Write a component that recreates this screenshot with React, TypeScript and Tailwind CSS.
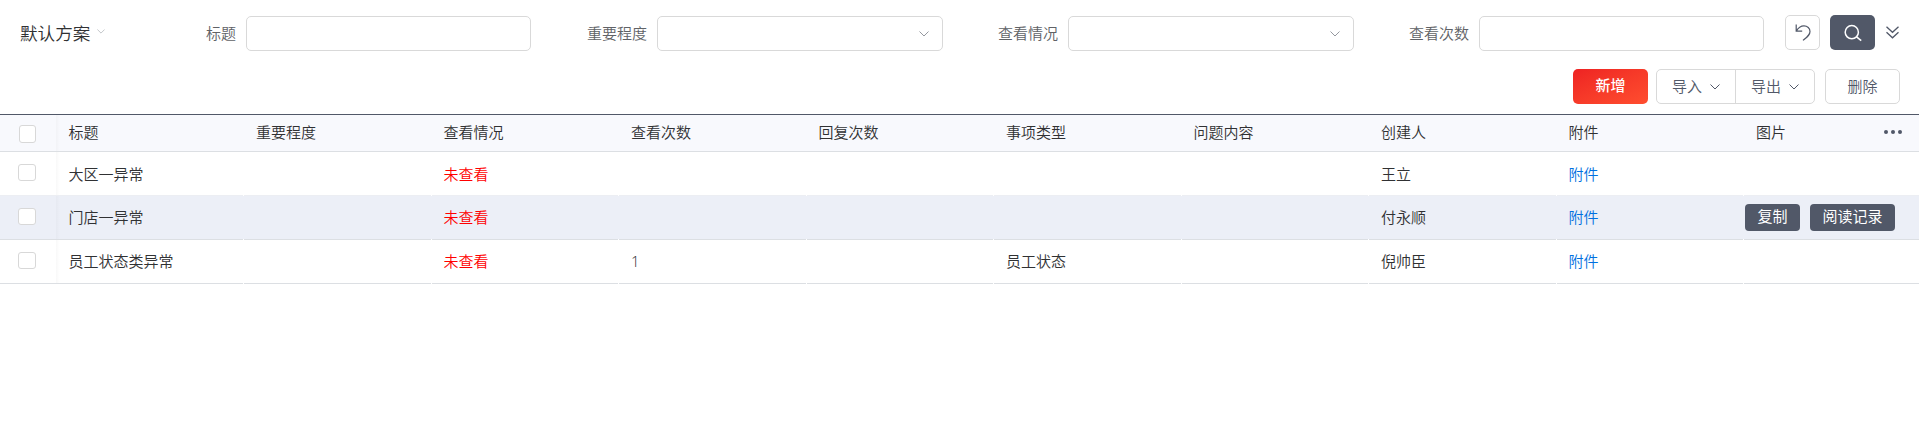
import type { ReactNode } from "react";

const columns = ["标题", "重要程度", "查看情况", "查看次数", "回复次数", "事项类型", "问题内容", "创建人", "附件", "图片"];

type Row = { title: string; count?: string; kind?: string; creator: string; active?: boolean; line: string; pad?: string };

const rows: Row[] = [
  { title: "大区一异常", creator: "王立", line: "bg-[#eceef3]", pad: "pt-[2px]" },
  { title: "门店一异常", creator: "付永顺", active: true, line: "bg-[#dcdfe3]" },
  { title: "员工状态类异常", count: "1", kind: "员工状态", creator: "倪帅臣", line: "bg-[#dcdfe3]" },
];

function Chevron({ className }: { className: string }) {
  return (
    <svg viewBox="0 0 10 6" fill="none" stroke="currentColor" className={className}>
      <path d="M0.5 0.5 5 5 9.5 0.5" />
    </svg>
  );
}

function Field({ label, select }: { label: string; select?: boolean }) {
  return (
    <div className="flex items-center gap-[10px]">
      <label className="w-[60px] pb-[2px] text-right text-[15px] leading-[33px] text-[#606266]">{label}</label>
      <div
        className={`flex h-[35px] items-center justify-end rounded-[5px] border border-[#d9d9d9] pr-[13px] ${
          select ? "w-[286px]" : "w-[285px]"
        }`}
      >
        {select && <Chevron className="h-[6px] w-[10px] text-[#95989f]" />}
      </div>
    </div>
  );
}

function Shade() {
  return <div className="w-[4px] shrink-0 bg-linear-to-r from-black/[0.025] to-transparent" />;
}

function Cell({ children }: { children: ReactNode }) {
  return <div className="flex w-[187.5px] shrink-0 items-center pl-[12.5px]">{children}</div>;
}

function ActionButton({ children, width }: { children: ReactNode; width: string }) {
  return (
    <button
      className={`flex h-[27px] items-center justify-center rounded-[4px] bg-[#515868] pb-[4px] text-[15px] font-normal leading-none text-white ${width}`}
    >
      {children}
    </button>
  );
}

function TableRow({ row }: { row: Row }) {
  const cells: ReactNode[] = [
    row.title,
    null,
    <span className="text-[#ff0000]">未查看</span>,
    row.count && <span className="font-['Open_Sans',sans-serif] font-light">{row.count}</span>,
    null,
    row.kind,
    null,
    row.creator,
    <a className="text-[#0070e0]">附件</a>,
    null,
  ];
  return (
    <div className="relative h-[44px] overflow-hidden text-[15px]">
      <div className={`flex h-[43px] ${row.active ? "bg-[#eceff7]" : "bg-white"}`}>
        <div className="w-[56px] shrink-0 pl-[18px] pt-[12px]">
          <span className="block h-[17px] w-[18px] rounded-[3px] border border-[#d8d8d8] bg-white" />
        </div>
        <Shade />
        <div className={`-ml-[4px] flex ${row.pad ?? ""}`}>
          {cells.map((cell, i) => (
            <Cell key={columns[i]}>{cell}</Cell>
          ))}
        </div>
      </div>
      <div className="flex h-px gap-px bg-white">
        <div className={`w-[243px] shrink-0 ${row.line}`} />
        {columns.slice(1).map((name) => (
          <div key={name} className={`w-[186.5px] shrink-0 ${row.line}`} />
        ))}
      </div>
      {row.active && (
        <div className="absolute right-[24px] top-[8px] flex gap-[10px]">
          <ActionButton width="w-[55px]">复制</ActionButton>
          <ActionButton width="w-[85px]">阅读记录</ActionButton>
        </div>
      )}
    </div>
  );
}

export default function App() {
  return (
    <div className="h-[430px] w-[1919px] overflow-hidden bg-white font-['Noto_Sans_CJK_SC',sans-serif] font-[350] text-[#303133]">
      <div className="flex h-[69px] items-start pl-[20px]">
        <div className="flex w-[156px] items-center gap-[7px] pt-[15px]">
          <span className="text-[17.6px] leading-[35px]">默认方案</span>
          <Chevron className="mb-[3px] h-[5px] w-[8px] text-[#b4b7bd]" />
        </div>
        <div className="flex pt-[16px]">
          <Field label="标题" />
          <div className="ml-[56px]">
            <Field label="重要程度" select />
          </div>
          <div className="ml-[55px]">
            <Field label="查看情况" select />
          </div>
          <div className="ml-[55px]">
            <Field label="查看次数" />
          </div>
        </div>
        <div className="ml-[21px] flex items-center pt-[15px] text-[#515868]">
          <button className="flex h-[35px] w-[35px] items-center justify-center rounded-[5px] border border-[#d9d9d9]">
            <svg viewBox="0 0 18 18" className="h-[18px] w-[18px]" fill="none" stroke="currentColor" strokeWidth="1.2">
              <path d="M2.2 0.6V7.2H8.2M2.2 7.2C4.2 3.8 6.8 1.9 10 1.9C13.4 1.9 16 4.4 16 7.5C16 11 13.4 12.8 9 16.4" />
            </svg>
          </button>
          <button className="ml-[10px] flex h-[35px] w-[45px] items-center justify-center rounded-[5px] bg-[#515868] text-white">
            <svg viewBox="0 0 18 18" className="h-[18px] w-[18px]" fill="none" stroke="currentColor" strokeWidth="1.5">
              <circle cx="7.8" cy="8.2" r="6.6" />
              <path d="M12.6 12.8 17.2 16.6" />
            </svg>
          </button>
          <svg viewBox="0 0 13 13" className="mb-[1px] ml-[11px] h-[13px] w-[13px]" fill="none" stroke="currentColor" strokeWidth="1.3">
            <path d="M0.5 0.8 6.5 6.3 12.5 0.8M0.5 6.3 6.5 11.8 12.5 6.3" />
          </svg>
        </div>
      </div>

      <div className="flex h-[45px] justify-end pr-[19px] text-[15px] text-[#515868]">
        <button className="flex h-[35px] w-[75px] items-center justify-center rounded-[5px] bg-linear-to-br from-[#ee2223] to-[#ff4d2f] pb-[2px] font-medium text-white">
          新增
        </button>
        <div className="ml-[8px] flex h-[35px] w-[159px] rounded-[5px] border border-[#d9d9d9]">
          <button className="flex w-[79px] items-center gap-[8px] border-r border-[#d9d9d9] pl-[15px]">
            导入
            <Chevron className="h-[6px] w-[10px]" />
          </button>
          <button className="flex flex-1 items-center gap-[8px] pl-[15px]">
            导出
            <Chevron className="h-[6px] w-[10px]" />
          </button>
        </div>
        <button className="ml-[10px] h-[35px] w-[75px] rounded-[5px] border border-[#d9d9d9]">删除</button>
      </div>

      <div className="border-t border-[#515868]">
        <div className="relative flex h-[37px] overflow-hidden border-b border-[#dcdfe3] bg-[#f8f9fd] text-[15px]">
          <div className="w-[56px] shrink-0 pl-[19px] pt-[10px]">
            <span className="block h-[18px] w-[17px] rounded-[3px] border border-[#d8d8d8] bg-white" />
          </div>
          <Shade />
          <div className="-ml-[4px] flex pb-[2px]">
            {columns.map((name) => (
              <Cell key={name}>{name}</Cell>
            ))}
          </div>
          <div className="absolute right-[17px] top-[15px] flex gap-[2.5px]">
            <span className="h-[4.4px] w-[4.4px] rounded-full bg-[#515868]" />
            <span className="h-[4.4px] w-[4.4px] rounded-full bg-[#515868]" />
            <span className="h-[4.4px] w-[4.4px] rounded-full bg-[#515868]" />
          </div>
        </div>
        {rows.map((row) => (
          <TableRow key={row.title} row={row} />
        ))}
      </div>
    </div>
  );
}
